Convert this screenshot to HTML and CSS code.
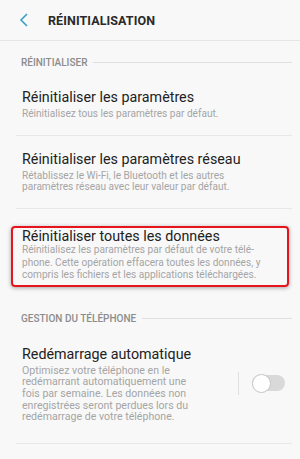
FILE: index.html
```html
<!DOCTYPE html>
<html lang="fr">
<head>
    <meta charset="UTF-8">
    <meta name="viewport" content="width=device-width, initial-scale=1.0">
    <title>Réinitialisation</title>
    <link rel="stylesheet" href="styles.css">
</head>
<body>
    <div class="entete">
        <svg class="retour" width="10" height="14" viewBox="0 0 10 14">
            <path d="M8 1 L2 7 L8 13" fill="none" stroke="#3a9fc4" stroke-width="1.6"/>
        </svg>
        <span class="titre">RÉINITIALISATION</span>
    </div>

    <div class="section">
        <span>RÉINITIALISER</span>
        <div class="trait"></div>
    </div>

    <div class="option">
        <div class="nom">Réinitialiser les paramètres</div>
        <div class="desc">Réinitialisez tous les paramètres par défaut.</div>
    </div>
    <div class="option">
        <div class="nom">Réinitialiser les paramètres réseau</div>
        <div class="desc etroite">Rétablissez le Wi-Fi, le Bluetooth et les autres paramètres réseau avec leur valeur par défaut.</div>
    </div>
    <div class="encadre">
        <div class="nom">Réinitialiser toutes les données</div>
        <div class="desc">Réinitialisez les paramètres par défaut de votre télé­phone. Cette opération effacera toutes les données, y compris les fichiers et les applications téléchargées.</div>
    </div>

    <div class="section">
        <span>GESTION DU TÉLÉPHONE</span>
        <div class="trait"></div>
    </div>

    <div class="option derniere">
        <div class="ligne">
            <div class="texte">
                <div class="nom">Redémarrage automatique</div>
                <div class="desc">Optimisez votre téléphone en le redémarrant automatiquement une fois par semaine. Les données non enregistrées seront perdues lors du redémarrage de votre téléphone.</div>
            </div>
            <div class="separateur"></div>
            <div class="interrupteur"><div class="bouton"></div></div>
        </div>
    </div>
</body>
</html>
```

FILE: styles.css
```css
body {
    font-family: Roboto, "Noto Sans", sans-serif;
    background-color: #f8f8f8;
    color: #222;
    margin: 0;
    width: 300px;
    height: 459px;
    overflow: hidden;
}
.entete {
    display: flex;
    align-items: center;
    height: 40px;
    border-bottom: 1px solid #e6e6e6;
    padding-left: 19px;
}
.retour {
    margin-right: 19px;
}
.titre {
    font-weight: bold;
    font-size: 12.5px;
    color: #2a2a2a;
    letter-spacing: 0.1px;
}
.section {
    display: flex;
    align-items: center;
    padding: 14px 8px 5px 21px;
    height: 14px;
    font-size: 10px;
    font-weight: 500;
    color: #8c8c8c;
}
.section .trait {
    flex: 1;
    height: 1px;
    background-color: #e0e0e0;
    margin-left: 6px;
}
.option {
    margin: 0 8px 0 16px;
    padding: 13px 0 15px 6px;
    border-bottom: 1px solid #e8e8e8;
}
.option.derniere {
    padding-bottom: 20px;
}
.nom {
    font-size: 14.3px;
    color: #222;
    line-height: 21px;
}
.desc {
    font-size: 10.1px;
    line-height: 11.7px;
    color: #a5a5a5;
}
.desc.etroite {
    max-width: 240px;
}
.encadre {
    margin: 17px 11px 11px;
    border: 2px solid #e8141c;
    border-radius: 4px;
    padding: 0 7px 3px 9px;
    box-shadow: 0 1px 4px rgba(0, 0, 0, 0.35);
}
.encadre .nom {
    line-height: 16px;
}
.encadre .desc {
    line-height: 12.5px;
}
.ligne {
    display: flex;
    align-items: center;
}
.texte {
    width: 176px;
}
.texte .desc {
    font-size: 10.6px;
}
.separateur {
    width: 1px;
    height: 23px;
    background-color: #e0e0e0;
    margin: 0 13px 0 40px;
}
.interrupteur {
    width: 33px;
    height: 16px;
    border-radius: 8px;
    background-color: #d9d9d9;
    position: relative;
}
.bouton {
    position: absolute;
    left: 0;
    top: -1.5px;
    width: 19px;
    height: 19px;
    border-radius: 50%;
    background-color: #fff;
    border: 1px solid #c6c6c6;
    box-sizing: border-box;
}
```
